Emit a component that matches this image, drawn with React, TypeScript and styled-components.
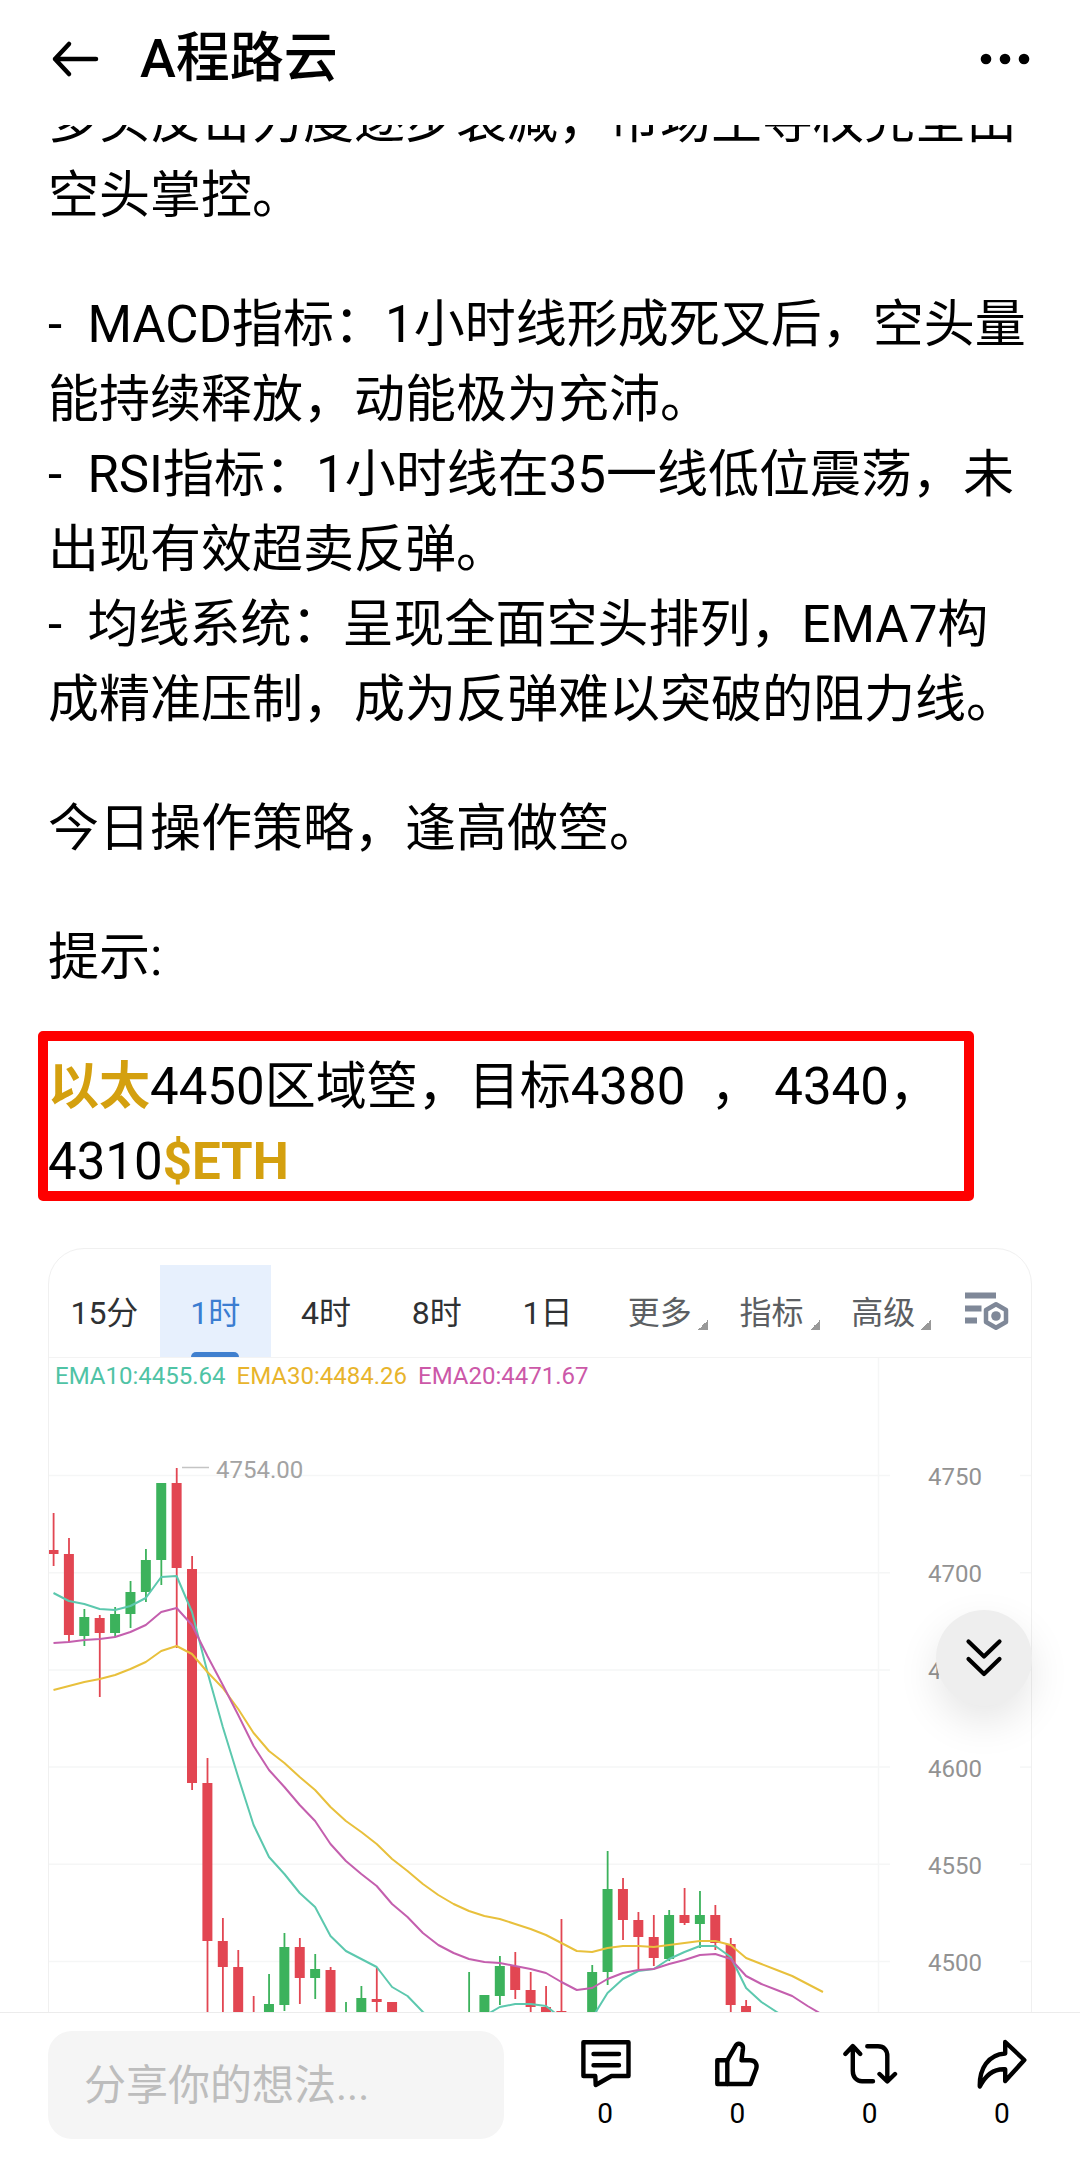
import React from 'react';
import styled, { createGlobalStyle } from 'styled-components';

const GlobalStyle = createGlobalStyle`
  * { box-sizing: border-box; }
  html, body { margin: 0; padding: 0; background: #ffffff; }
  body, button, input {
    font-family: Roboto, 'Noto Sans CJK SC', sans-serif;
    color: #000000;
  }
  button { border: 0; padding: 0; background: none; cursor: pointer; }
`;

const Page = styled.div`
  display: flex;
  flex-direction: column;
  height: 100vh;
  background: #ffffff;
`;

const Header = styled.header`
  display: flex;
  align-items: center;
  flex: none;
  height: 125px;
  padding: 0 48px 8px;
`;

const Title = styled.h1`
  flex: 1;
  margin: 0 0 0 40px;
  font-size: 54px;
  line-height: 72px;
  font-weight: 500;
`;

const IconButton = styled.button`
  display: flex;
  align-items: center;
  justify-content: center;
  height: 56px;
`;

const Stage = styled.main`
  position: relative;
  flex: 1;
  min-height: 0;
  overflow: hidden;
`;

const Post = styled.article`
  margin-top: -42px;
  padding: 0 48px;
`;

const Paragraph = styled.p`
  position: relative;
  margin: 0 0 54px;
  font-size: 51px;
  line-height: 75px;

  &:last-of-type {
    margin-bottom: 49px;
  }
`;

const Tag = styled.a`
  color: #d4a00f;
  font-weight: 700;
  text-decoration: none;
`;

const RedFrame = styled.span`
  position: absolute;
  top: -18px;
  right: 58px;
  bottom: -2px;
  left: -10px;
  border: 10px solid #fe0000;
  border-radius: 5px;
  pointer-events: none;
`;

const ChartCard = styled.section`
  position: relative;
  padding-top: 16px;
  border: 1px solid #f0f0f0;
  border-radius: 36px;
  overflow: hidden;
`;

const Toolbar = styled.div`
  display: grid;
  grid-template-columns: 555fr 429fr;
  height: 93px;
  border-bottom: 1px solid #f3f3f3;
`;

const Periods = styled.div`
  display: grid;
  grid-template-columns: repeat(5, 1fr);
`;

const Period = styled.button<{ $active?: boolean }>`
  position: relative;
  padding-top: 3px;
  font-size: 32px;
  line-height: 48px;
  color: ${(p) => (p.$active ? '#3b7dd1' : '#2f3133')};
  background: ${(p) => (p.$active ? '#e7f0fd' : 'transparent')};

  &::after {
    content: '';
    display: ${(p) => (p.$active ? 'block' : 'none')};
    position: absolute;
    left: calc(50% - 24px);
    bottom: 0;
    width: 48px;
    height: 5px;
    border-radius: 5px 5px 0 0;
    background: #4080cf;
  }
`;

const Menus = styled.div`
  display: grid;
  grid-template-columns: repeat(3, 112fr) 79fr;
  padding: 0 5px 0 9px;
`;

const MenuButton = styled.button`
  display: flex;
  align-items: center;
  justify-content: center;
  gap: 6px;
  padding-top: 3px;
  font-size: 32px;
  line-height: 48px;
  color: #5c5f63;

  &::after {
    content: '';
    width: 10px;
    height: 10px;
    margin-top: 24px;
    background: linear-gradient(135deg, transparent 50%, #999999 50%);
  }
`;

const SettingsButton = styled.button`
  display: flex;
  align-items: center;
  justify-content: center;
`;

const ChartBody = styled.div`
  position: relative;
`;

const Legend = styled.div`
  position: absolute;
  top: 2px;
  left: 6px;
  display: flex;
  gap: 11px;
  font-size: 24px;
  line-height: 32px;
`;

const LegendItem = styled.span<{ $color: string }>`
  color: ${(p) => p.$color};
`;

const ChartSvg = styled.svg`
  display: block;
  width: 100%;
  font-family: Roboto, sans-serif;
  font-size: 24px;
`;

const ScrollDown = styled.button`
  position: absolute;
  right: 48px;
  bottom: 306px;
  display: flex;
  align-items: center;
  justify-content: center;
  width: 96px;
  height: 96px;
  border-radius: 50%;
  background: #eeeeee;
  box-shadow: 0 16px 40px rgba(0, 0, 0, 0.1);
`;

const Footer = styled.footer`
  display: grid;
  grid-template-columns: 456fr 529fr;
  gap: 35px;
  align-items: start;
  flex: none;
  height: 172px;
  padding: 18px 12px 0 48px;
  border-top: 1px solid #ececec;
`;

const CommentInput = styled.input`
  width: 100%;
  height: 108px;
  padding: 0 36px;
  border: 0;
  border-radius: 24px;
  outline: 0;
  background: #f5f5f5;
  font-size: 42px;

  &::placeholder {
    color: #bdbdbd;
    opacity: 1;
  }
`;

const Actions = styled.div`
  display: grid;
  grid-template-columns: repeat(4, 1fr);
  padding-top: 5px;
`;

const Action = styled.button`
  display: flex;
  flex-direction: column;
  align-items: center;
  gap: 4px;
  font-size: 28px;
  line-height: 36px;
`;

const GREEN = '#3cb25c';
const RED = '#e24652';
const BELOW = 2060;
const FIRST_X = 53.5;
const STEP = 15.39;

const candleX = (i: number) => FIRST_X + STEP * i;

// [slot, high, body top, body bottom, low, rising]
type Candle = [number, number, number, number, number, boolean];

const candles: Candle[] = [
  [0, 1513, 1550, 1554, 1566, false],
  [1, 1538, 1554, 1635, 1642, false],
  [2, 1609, 1617, 1636, 1646, true],
  [3, 1615, 1618, 1633, 1697, false],
  [4, 1607, 1614, 1633, 1637, true],
  [5, 1581, 1592, 1614, 1628, true],
  [6, 1549, 1560, 1592, 1602, true],
  [7, 1483, 1483, 1560, 1585, true],
  [8, 1468, 1483, 1568, 1648, false],
  [9, 1556, 1569, 1783, 1790, false],
  [10, 1758, 1783, 1941, BELOW, false],
  [11, 1918, 1941, 1967, BELOW, false],
  [12, 1950, 1967, BELOW, BELOW, false],
  [13, 1996, 2030, BELOW, BELOW, false],
  [14, 1974, 2004, BELOW, BELOW, true],
  [15, 1933, 1947, 2005, 2011, true],
  [16, 1938, 1947, 1978, 2004, false],
  [17, 1954, 1969, 1978, 1999, true],
  [18, 1967, 1970, BELOW, BELOW, false],
  [19, 2002, 2030, BELOW, BELOW, true],
  [20, 1986, 1998, BELOW, BELOW, true],
  [21, 1968, 1999, 2002, BELOW, false],
  [22, 2002, 2002, BELOW, BELOW, false],
  [27, 1972, 2030, BELOW, BELOW, true],
  [28, 1995, 1995, BELOW, BELOW, true],
  [29, 1956, 1966, 1996, 2005, true],
  [30, 1952, 1966, 1990, 1999, false],
  [31, 1972, 1990, 2007, BELOW, false],
  [32, 1986, 2007, 2020, BELOW, false],
  [33, 1919, 2011, 2020, BELOW, false],
  [35, 1965, 1972, BELOW, BELOW, true],
  [36, 1851, 1889, 1972, 1985, true],
  [37, 1878, 1889, 1920, 1940, false],
  [38, 1912, 1920, 1937, 1969, false],
  [39, 1915, 1937, 1958, 1966, false],
  [40, 1910, 1915, 1959, 1961, true],
  [41, 1888, 1915, 1923, 1925, false],
  [42, 1891, 1915, 1924, 1948, true],
  [43, 1905, 1915, 1943, 1950, false],
  [44, 1938, 1944, 2005, BELOW, false],
  [45, 2000, 2006, BELOW, BELOW, false],
];

const ema10 = [
  1593, 1601, 1604, 1609, 1610, 1606, 1598, 1577, 1576, 1612, 1672, 1727, 1777, 1825, 1857, 1874, 1893,
  1907, 1936, 1951, 1959, 1967, 1987, 1996, 2012, 2024, 2027, 2023, 2016, 2007, 2004, 2004, 2006, 2018,
  2030, 2018, 1993, 1979, 1971, 1969, 1959, 1952, 1946, 1946, 1957, 1988, 2002, 2012, 2022,
];
const ema20 = [
  1643, 1642, 1640, 1639, 1637, 1632, 1625, 1612, 1608, 1625, 1656, 1685, 1715, 1746, 1770, 1787, 1805,
  1821, 1844, 1861, 1874, 1886, 1904, 1917, 1933, 1945, 1953, 1959, 1962, 1963, 1966, 1969, 1973, 1982,
  1990, 1988, 1979, 1973, 1970, 1969, 1964, 1960, 1955, 1954, 1959, 1976, 1984, 1990, 1996, 2006, 2015,
];
const ema30 = [
  1690, 1686, 1682, 1679, 1675, 1669, 1662, 1651, 1646, 1654, 1672, 1688, 1709, 1733, 1751, 1763, 1777,
  1790, 1807, 1821, 1832, 1844, 1859, 1871, 1884, 1895, 1904, 1911, 1916, 1919, 1924, 1929, 1935, 1943,
  1951, 1952, 1948, 1946, 1946, 1947, 1945, 1943, 1941, 1941, 1945, 1958, 1964, 1970, 1976, 1984, 1992,
];

const toPoints = (ys: number[]) => ys.map((y, i) => `${candleX(i).toFixed(1)},${y}`).join(' ');

const prices = [4750, 4700, 4650, 4600, 4550, 4500];

const PriceChart = () => (
  <ChartSvg viewBox="49 1358 982 700" role="img" aria-label="ETH 1时 K线">
    <g stroke="#f5f6f6" strokeWidth="1.5">
      <line x1="878.5" x2="878.5" y1="1358" y2="2058" />
      {prices.map((price, i) => (
        <React.Fragment key={price}>
          <line x1="48" x2="890" y1={1475.5 + i * 97.2} y2={1475.5 + i * 97.2} />
          <line x1="1020" x2="1032" y1={1475.5 + i * 97.2} y2={1475.5 + i * 97.2} />
        </React.Fragment>
      ))}
    </g>
    <g fill="#929292">
      {prices.map((price, i) => (
        <text key={price} x="928" y={1485 + i * 97.2}>
          {price}
        </text>
      ))}
    </g>
    {candles.map(([slot, high, top, bottom, low, rising]) => (
      <g key={slot} fill={rising ? GREEN : RED}>
        <rect x={candleX(slot) - 0.8} y={high} width="1.8" height={low - high} />
        <rect x={candleX(slot) - 5} y={top} width="10" height={bottom - top} />
      </g>
    ))}
    <g fill="none" strokeWidth="2" strokeLinejoin="round">
      <polyline points={toPoints(ema10)} stroke="#5cc8ae" />
      <polyline points={toPoints(ema30)} stroke="#e8c03c" />
      <polyline points={toPoints(ema20)} stroke="#c45fae" />
    </g>
    <line x1="182" x2="209" y1="1467.5" y2="1467.5" stroke="#c4c4c4" strokeWidth="1.5" />
    <text x="216" y="1478" fill="#a3a3a3">
      4754.00
    </text>
  </ChartSvg>
);

const BackIcon = () => (
  <svg width="52" height="40" viewBox="0 0 52 40" fill="none" stroke="#000" strokeWidth="4.5" strokeLinecap="round" strokeLinejoin="round">
    <path d="M48 20H7M21 5 7 20l14 15" />
  </svg>
);

const MoreIcon = () => (
  <svg width="52" height="20" viewBox="0 0 52 20">
    <circle cx="6" cy="10" r="5.3" />
    <circle cx="25" cy="10" r="5.3" />
    <circle cx="44" cy="10" r="5.3" />
  </svg>
);

const ChartSettingsIcon = () => (
  <svg width="44" height="38" viewBox="0 0 44 38">
    <path d="M0 0.500h31v6H0zM0 13.500h16.500v6H0zM0 25.500h12v6H0z" fill="#7f8898" />
    <path d="M31 12.300 41 18v12L31 35.700 21 30V18z" fill="none" stroke="#7f8898" strokeWidth="4.500" strokeLinejoin="round" />
    <circle cx="31" cy="24" r="4.800" fill="#7f8898" />
  </svg>
);

const DoubleDownIcon = () => (
  <svg width="40" height="44" viewBox="0 0 40 44" fill="none" stroke="#000" strokeWidth="4.200" strokeLinecap="round" strokeLinejoin="round">
    <path d="M4.500 5.500 20 20.500 35.500 5.500M4.500 23 20 38 35.500 23" />
  </svg>
);

const strokeProps = {
  width: 56,
  height: 56,
  viewBox: '0 0 56 56',
  fill: 'none',
  stroke: '#000',
  strokeWidth: 4.4,
  strokeLinecap: 'round' as const,
  strokeLinejoin: 'round' as const,
};

const CommentIcon = () => (
  <svg {...strokeProps}>
    <path d="M6.400 6.300H51.500V40H34.500L18.700 49 18.300 40H6.400z" />
    <path d="M16.500 18H42M16.500 29.300H42" />
  </svg>
);

const LikeIcon = () => (
  <svg {...strokeProps}>
    <path d="M8.300 24.300H18.300L26.300 10.300C28.500 6 34.300 7.500 34 12.500L32.500 24.300H41C46 24.300 48.500 28 47.300 32.500L41.500 48H8.300z" />
    <path d="M18.300 24.300V48" />
  </svg>
);

const RepostIcon = () => (
  <svg {...strokeProps}>
    <path d="M3.300 18 10.800 10 18.300 18M10.800 10.500V35C10.800 41 14.500 45.300 20 45.300H31" />
    <path d="M25.300 10.300H36C42 10.300 45.300 14 45.300 20V45M37.500 38 45.300 45.500 53 38" />
  </svg>
);

const ShareIcon = () => (
  <svg {...strokeProps}>
    <path d="M31.200 6 50.300 24 31.200 45V33.300C21 32.500 12 38.500 5.800 50.500 5.300 33 14 18.500 31.200 17.500z" />
  </svg>
);

const actions = [
  { label: '评论', Icon: CommentIcon, count: 0 },
  { label: '点赞', Icon: LikeIcon, count: 0 },
  { label: '转发', Icon: RepostIcon, count: 0 },
  { label: '分享', Icon: ShareIcon, count: 0 },
];

export default function App() {
  return (
    <Page>
      <GlobalStyle />
      <Header>
        <IconButton type="button" aria-label="返回">
          <BackIcon />
        </IconButton>
        <Title>A程路云</Title>
        <IconButton type="button" aria-label="更多选项">
          <MoreIcon />
        </IconButton>
      </Header>

      <Stage>
        <Post>
          <Paragraph>
            多头反击力度逐步衰减，市场主导权完全由
            <br />
            空头掌控。
          </Paragraph>
          <Paragraph>
            -&nbsp; MACD指标：1小时线形成死叉后，空头量
            <br />
            能持续释放，动能极为充沛。
            <br />
            -&nbsp; RSI指标：1小时线在35一线低位震荡，未
            <br />
            出现有效超卖反弹。
            <br />
            -&nbsp; 均线系统：呈现全面空头排列，EMA7构
            <br />
            成精准压制，成为反弹难以突破的阻力线。
          </Paragraph>
          <Paragraph>今日操作策略，逢高做箜。</Paragraph>
          <Paragraph>提示:</Paragraph>
          <Paragraph>
            <Tag href="#yitai">以太</Tag>4450区域箜，目标4380&nbsp; ， 4340，
            <br />
            4310<Tag href="#eth">$ETH</Tag>
            <RedFrame />
          </Paragraph>

          <ChartCard>
            <Toolbar>
              <Periods>
                {['15分', '1时', '4时', '8时', '1日'].map((name) => (
                  <Period key={name} type="button" $active={name === '1时'}>
                    {name}
                  </Period>
                ))}
              </Periods>
              <Menus>
                {['更多', '指标', '高级'].map((name) => (
                  <MenuButton key={name} type="button">
                    {name}
                  </MenuButton>
                ))}
                <SettingsButton type="button" aria-label="图表设置">
                  <ChartSettingsIcon />
                </SettingsButton>
              </Menus>
            </Toolbar>
            <ChartBody>
              <PriceChart />
              <Legend>
                <LegendItem $color="#4fc3a5">EMA10:4455.64</LegendItem>
                <LegendItem $color="#e8b42c">EMA30:4484.26</LegendItem>
                <LegendItem $color="#cc58a8">EMA20:4471.67</LegendItem>
              </Legend>
            </ChartBody>
          </ChartCard>
        </Post>
        <ScrollDown type="button" aria-label="跳到底部">
          <DoubleDownIcon />
        </ScrollDown>
      </Stage>

      <Footer>
        <CommentInput type="text" aria-label="评论内容" placeholder="分享你的想法..." />
        <Actions>
          {actions.map(({ label, Icon, count }) => (
            <Action key={label} type="button" aria-label={label}>
              <Icon />
              <span>{count}</span>
            </Action>
          ))}
        </Actions>
      </Footer>
    </Page>
  );
}
